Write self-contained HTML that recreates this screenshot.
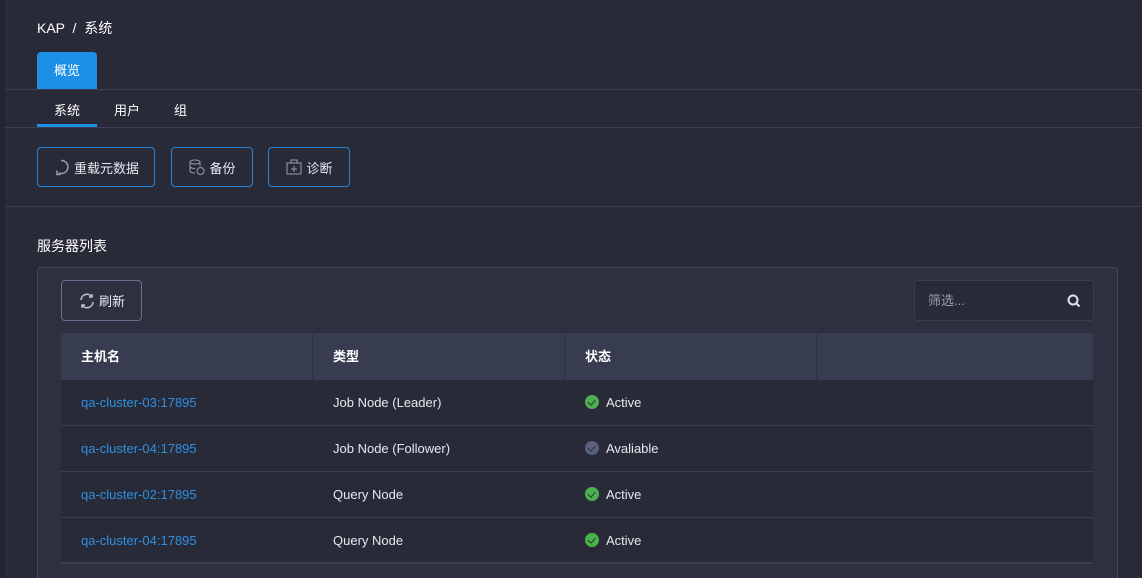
<!DOCTYPE html>
<html><head><meta charset="utf-8"><style>
*{margin:0;padding:0;box-sizing:border-box}
html,body{width:1142px;height:578px;overflow:hidden}
body{background:#292a38;font-family:"Liberation Sans","Noto Sans CJK SC",sans-serif;color:#e6e8f0;position:relative}
.abs{position:absolute}
.strip{left:0;top:0;width:5px;height:578px;background:#232430}
.hline{left:5px;right:0;height:1px;background:#3b3e52}
.btn{position:absolute;top:147px;height:40px;border:1px solid #2584d6;border-radius:4px;font-size:13px;display:flex;align-items:center;justify-content:center;gap:3px;color:#e8e8f0}
.panel{left:37px;top:267px;width:1081px;height:330px;background:#2e303f;border:1px solid #454860;border-radius:4px}
.th{position:absolute;top:333px;height:47px;background:#383c50;font-size:13px;font-weight:bold;line-height:47px;padding-left:20px;color:#fff}
.row{position:absolute;left:61px;width:1032px;height:46px;background:#282a37;border-bottom:1px solid #3b3e53;font-size:13px}
.row span{position:absolute;top:0;line-height:46px}
.link{color:#2f8fe0;left:20px}
.ok{display:inline-block;width:14px;height:14px;border-radius:50%;background:#4caf50;vertical-align:-2px;margin-right:7px;position:relative}
.ok.g{background:#5a6080}
.ok:after{content:"";position:absolute;left:4px;top:3px;width:4px;height:6px;border:solid #2a3a2a;border-width:0 1px 1px 0;transform:rotate(40deg)}
</style></head><body>
<div class="abs strip"></div>
<div class="abs" style="left:37px;top:18px;font-size:14px;color:#fff">KAP &nbsp;/&nbsp; 系统</div>
<div class="abs" style="left:37px;top:52px;width:60px;height:37px;background:#1e8fe6;border-radius:4px 4px 0 0;font-size:13px;color:#fff;text-align:center;line-height:37px">概览</div>
<div class="abs hline" style="top:89px"></div>
<div class="abs" style="left:54px;top:100px;font-size:13px;color:#fff">系统</div>
<div class="abs" style="left:114px;top:100px;font-size:13px;color:#fff">用户</div>
<div class="abs" style="left:174px;top:100px;font-size:13px;color:#fff">组</div>
<div class="abs" style="left:37px;top:124px;width:60px;height:3px;background:#1e8fe6"></div>
<div class="abs hline" style="top:127px"></div>
<div class="btn" style="left:37px;width:118px"><svg width="18" height="18" viewBox="0 0 18 18"><path d="M8 2.5A6.5 6.5 0 1 1 6 15" fill="none" stroke="#9a9db0" stroke-width="1.5"/><path d="M4 12.5v4h3.5" fill="none" stroke="#9a9db0" stroke-width="1.5"/></svg>重载元数据</div>
<div class="btn" style="left:171px;width:82px"><svg width="18" height="18" viewBox="0 0 18 18"><ellipse cx="7" cy="4" rx="5" ry="2" fill="none" stroke="#9a9db0"/><path d="M2 4v9c0 1 2 2 5 2M12 4v4M2 8.5c0 1 2 2 5 2" fill="none" stroke="#9a9db0"/><circle cx="12.5" cy="13" r="3.5" fill="none" stroke="#9a9db0"/></svg>备份</div>
<div class="btn" style="left:268px;width:82px"><svg width="18" height="18" viewBox="0 0 18 18"><rect x="2" y="5" width="14" height="11" fill="none" stroke="#9a9db0"/><path d="M6 5V2h6v3M9 8v6M6 11h6" fill="none" stroke="#9a9db0"/></svg>诊断</div>
<div class="abs hline" style="top:206px"></div>
<div class="abs" style="left:37px;top:236px;font-size:14px;color:#fff">服务器列表</div>
<div class="abs panel"></div>
<div class="abs" style="left:61px;top:280px;width:81px;height:41px;border:1px solid #6b7090;border-radius:4px;display:flex;align-items:center;justify-content:center;gap:3px;font-size:13px"><svg width="18" height="18" viewBox="0 0 18 18"><path d="M3 8a6 6 0 0 1 11-3M15 10a6 6 0 0 1-11 3" fill="none" stroke="#c0c3d0" stroke-width="1.5"/><path d="M14 2v3h-3M4 16v-3h3" fill="none" stroke="#c0c3d0" stroke-width="1.5"/></svg>刷新</div>
<div class="abs" style="left:914px;top:280px;width:180px;height:41px;border:1px solid #3c3f52;border-radius:4px;background:#282a37;font-size:13px;color:#9a9db0;line-height:39px;padding-left:13px">筛选...<svg class="abs" style="right:11px;top:12px" width="16" height="16" viewBox="0 0 16 16"><circle cx="7" cy="7" r="4.5" fill="none" stroke="#e0e2ea" stroke-width="2"/><path d="M10 10l3.5 3.5" stroke="#e0e2ea" stroke-width="2"/></svg></div>
<div class="th" style="left:61px;width:251px">主机名</div>
<div class="th" style="left:313px;width:251px">类型</div>
<div class="th" style="left:565px;width:251px">状态</div>
<div class="th" style="left:817px;width:276px"></div>
<div class="row" style="top:380px"><span class="link">qa-cluster-03:17895</span><span style="left:272px">Job Node (Leader)</span><span style="left:524px"><i class="ok"></i>Active</span></div>
<div class="row" style="top:426px"><span class="link">qa-cluster-04:17895</span><span style="left:272px">Job Node (Follower)</span><span style="left:524px"><i class="ok g"></i>Avaliable</span></div>
<div class="row" style="top:472px"><span class="link">qa-cluster-02:17895</span><span style="left:272px">Query Node</span><span style="left:524px"><i class="ok"></i>Active</span></div>
<div class="row" style="top:518px;border-bottom:2px solid #3b3e53"><span class="link">qa-cluster-04:17895</span><span style="left:272px">Query Node</span><span style="left:524px"><i class="ok"></i>Active</span></div>
</body></html>
